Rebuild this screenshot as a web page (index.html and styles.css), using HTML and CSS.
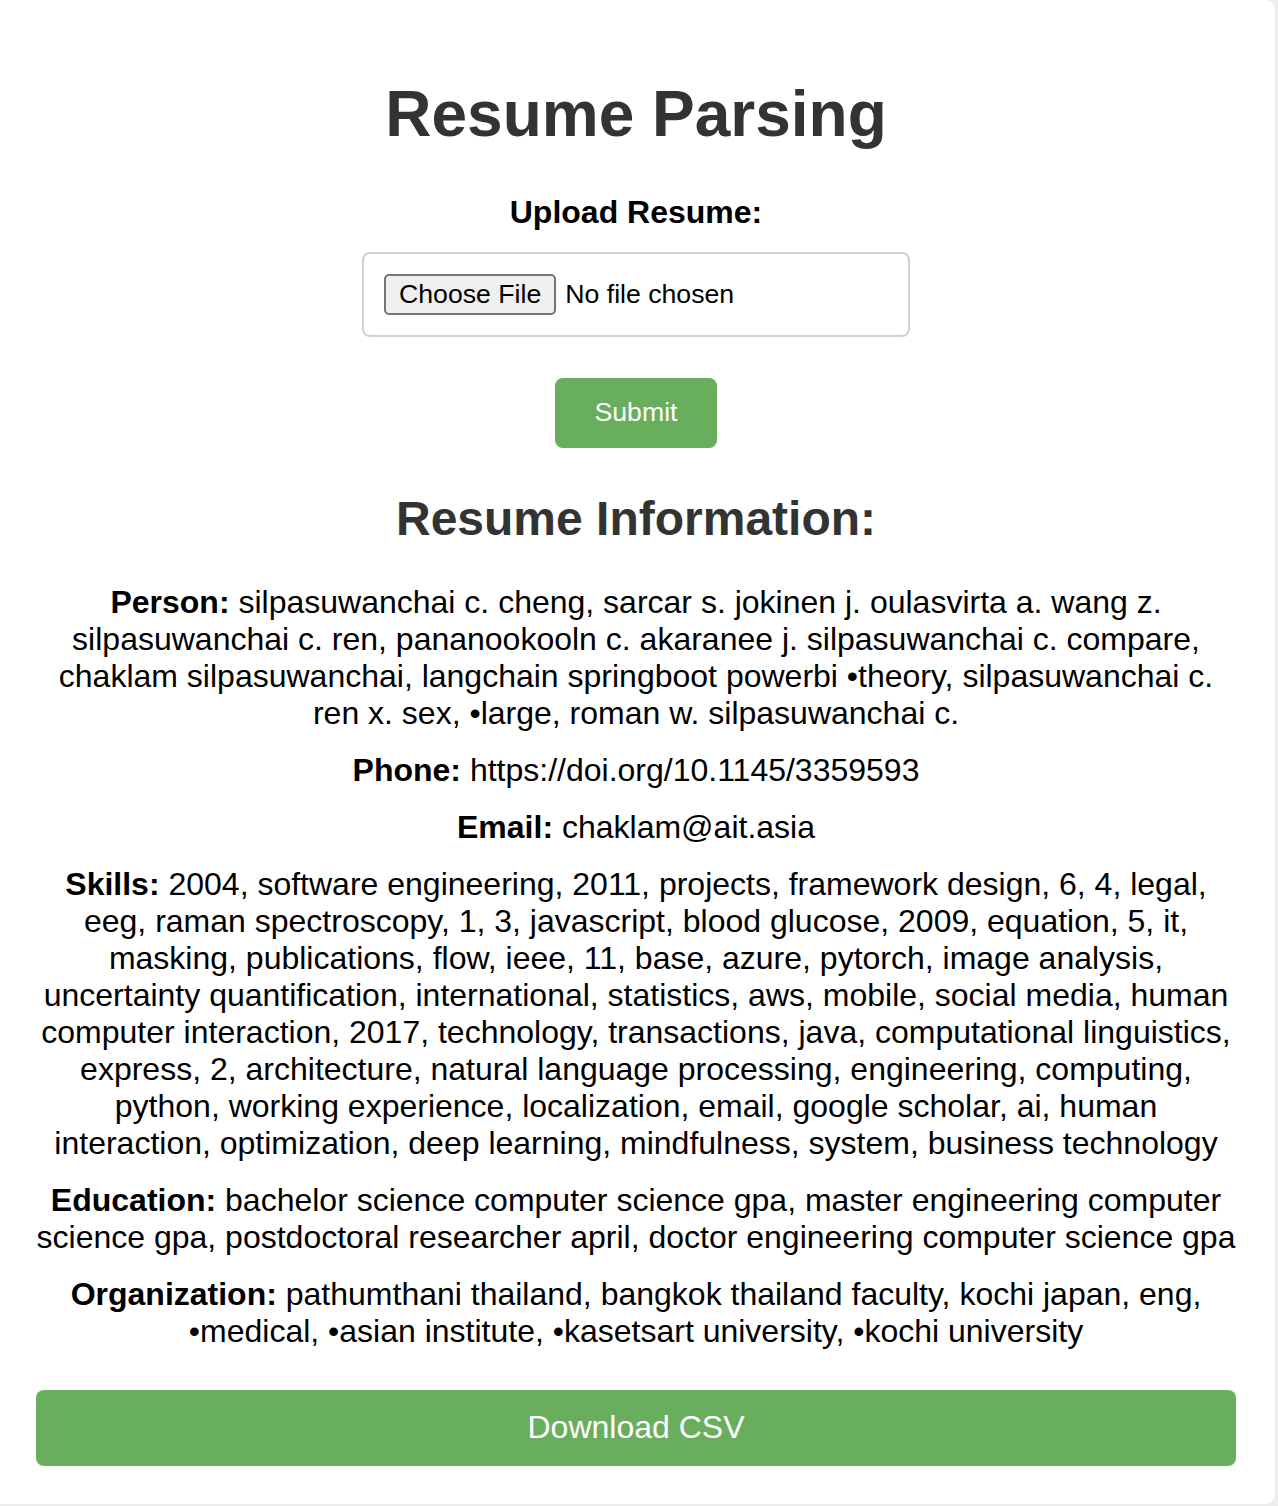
FILE: index.html
```html
<!DOCTYPE html>
<html lang="en">
<head>
<meta charset="utf-8">
<title>Resume Parsing</title>
<link rel="stylesheet" href="styles.css">
</head>
<body>
<div class="container">
  <h1 class="title">Resume Parsing</h1>
  <form class="upload-form">
    <label class="upload-label">Upload Resume:</label>
    <div class="file-box">
      <span class="file-btn">Choose File</span>
      <span class="file-name">No file chosen</span>
    </div>
    <button type="button" class="submit-btn">Submit</button>
  </form>
  <h2 class="subtitle">Resume Information:</h2>
  <p class="info"><strong>Person:</strong> silpasuwanchai c. cheng, sarcar s. jokinen j. oulasvirta a. wang z. silpasuwanchai c. ren, pananookooln c. akaranee j. silpasuwanchai c. compare, chaklam silpasuwanchai, langchain springboot powerbi •theory, silpasuwanchai c. ren x. sex, •large, roman w. silpasuwanchai c.</p>
  <p class="info"><strong>Phone:</strong> https://doi.org/10.1145/3359593</p>
  <p class="info"><strong>Email:</strong> chaklam@ait.asia</p>
  <p class="info"><strong>Skills:</strong> 2004, software engineering, 2011, projects, framework design, 6, 4, legal, eeg, raman spectroscopy, 1, 3, javascript, blood glucose, 2009, equation, 5, it, masking, publications, flow, ieee, 11, base, azure, pytorch, image analysis, uncertainty quantification, international, statistics, aws, mobile, social media, human computer interaction, 2017, technology, transactions, java, computational linguistics, express, 2, architecture, natural language processing, engineering, computing, python, working experience, localization, email, google scholar, ai, human interaction, optimization, deep learning, mindfulness, system, business technology</p>
  <p class="info"><strong>Education:</strong> bachelor science computer science gpa, master engineering computer science gpa, postdoctoral researcher april, doctor engineering computer science gpa</p>
  <p class="info"><strong>Organization:</strong> pathumthani thailand, bangkok thailand faculty, kochi japan, eng, •medical, •asian institute, •kasetsart university, •kochi university</p>
  <button type="button" class="download-btn">Download CSV</button>
</div>
</body>
</html>
```

FILE: styles.css
```css
html, body {
  margin: 0;
  padding: 0;
}
body {
  background: #ececec;
  font-family: "Liberation Sans", Arial, Helvetica, sans-serif;
  color: #000;
}
.container {
  background: #fff;
  margin: 0 3px 3px 0;
  padding: 35px 39px 38px 36px;
  border-radius: 0 10px 10px 0;
  text-align: center;
}
.title {
  font-size: 64px;
  font-weight: bold;
  color: #333;
  margin: 43px 0 42px;
  line-height: 73.6px;
}
.upload-form {
  display: flex;
  flex-direction: column;
  align-items: center;
}
.upload-label {
  display: block;
  font-size: 32px;
  font-weight: bold;
  line-height: 37px;
  margin-bottom: 21px;
}
.file-box {
  box-sizing: border-box;
  width: 548px;
  height: 85px;
  border: 2px solid #d0d0d0;
  border-radius: 8px;
  padding: 20px;
  display: flex;
  align-items: center;
  gap: 9px;
  font-size: 26.67px;
}
.file-btn {
  box-sizing: border-box;
  height: 41px;
  padding: 0 13px;
  display: flex;
  align-items: center;
  background: #efefef;
  border: 2px solid #767676;
  border-radius: 5px;
  color: #000;
}
.file-name {
  color: #000;
}
.submit-btn {
  margin-top: 41px;
  width: 162px;
  height: 70px;
  background: #69ae5d;
  color: #fff;
  border: none;
  border-radius: 8px;
  font-family: inherit;
  font-size: 26.67px;
  padding: 0;
}
.subtitle {
  font-size: 48px;
  font-weight: bold;
  color: #333;
  line-height: 55px;
  margin: 43px 0 38px;
}
.info {
  font-size: 32px;
  line-height: 37px;
  margin: 20px 0;
}
.subtitle + .info {
  margin-top: 0;
}
.download-btn {
  display: block;
  width: 100%;
  height: 76px;
  margin-top: 40px;
  background: #69ae5d;
  color: #fff;
  border: none;
  border-radius: 8px;
  font-family: inherit;
  font-size: 32px;
  padding: 0;
}
```
